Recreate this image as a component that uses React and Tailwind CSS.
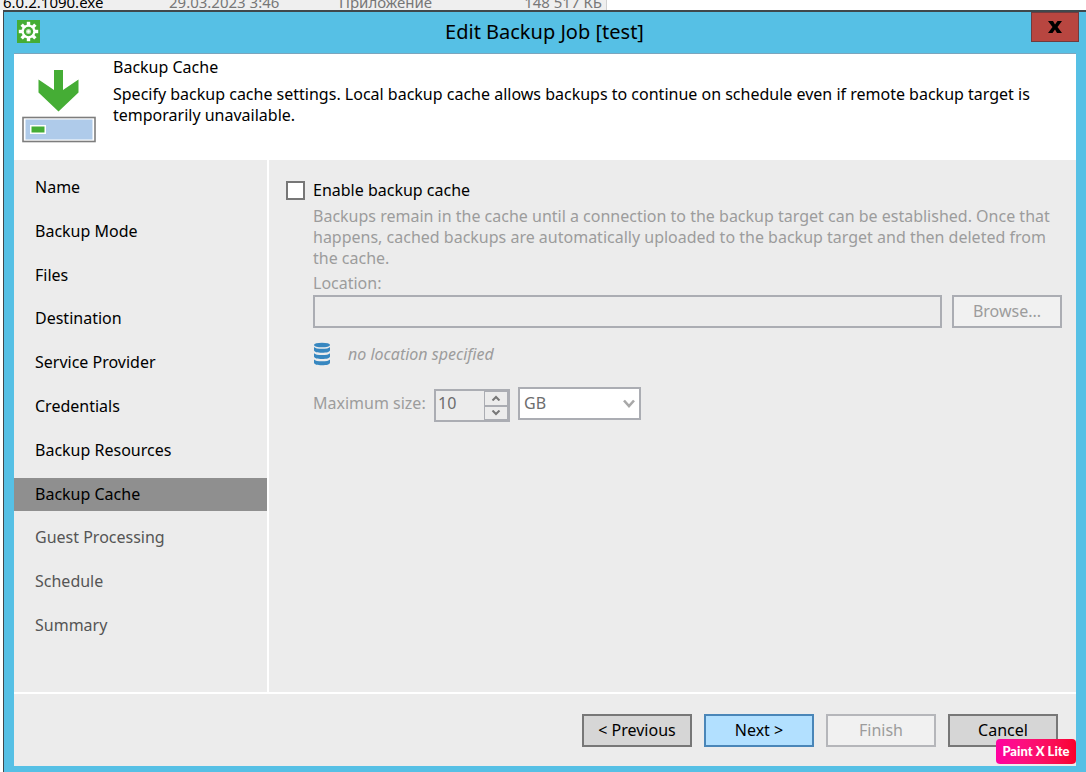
import React, { useState } from 'react';

const steps = [
  { name: 'Name', visited: true },
  { name: 'Backup Mode', visited: true },
  { name: 'Files', visited: true },
  { name: 'Destination', visited: true },
  { name: 'Service Provider', visited: true },
  { name: 'Credentials', visited: true },
  { name: 'Backup Resources', visited: true },
  { name: 'Backup Cache', visited: true },
  { name: 'Guest Processing', visited: false },
  { name: 'Schedule', visited: false },
  { name: 'Summary', visited: false },
];

const GearIcon = () => (
  <svg viewBox="0 0 23 23" className="h-[23px] w-[23px]" aria-hidden="true">
    <rect width="23" height="23" fill="#45ad35" />
    <g fill="#fff">
      <rect x="9.8" y="1.8" width="3.4" height="19.4" />
      <rect x="9.8" y="1.8" width="3.4" height="19.4" transform="rotate(45 11.5 11.5)" />
      <rect x="9.8" y="1.8" width="3.4" height="19.4" transform="rotate(90 11.5 11.5)" />
      <rect x="9.8" y="1.8" width="3.4" height="19.4" transform="rotate(135 11.5 11.5)" />
      <circle cx="11.5" cy="11.5" r="7" />
    </g>
    <circle cx="11.5" cy="11.5" r="4.7" fill="#45ad35" />
    <circle cx="11.5" cy="11.5" r="2.5" fill="#c4e6bd" />
    <circle cx="11.5" cy="11.5" r="1.2" fill="#fff" />
  </svg>
);

const CacheIcon = () => (
  <svg viewBox="0 0 74 74" className="h-[74px] w-[74px] shrink-0" aria-hidden="true">
    <path d="M32 1h9v20l15.500-10.500v13L36.500 42.500 16.500 23.500v-13L32 21z" fill="#45ad35" />
    <rect x="1" y="48.500" width="72" height="24" fill="#fff" stroke="#7d7d7d" strokeWidth="1.600" />
    <rect x="3.500" y="50.500" width="67" height="20" fill="#afcbea" />
    <rect x="8" y="56" width="16" height="9" fill="#fff" />
    <rect x="9.500" y="57.500" width="13" height="6" fill="#45ad35" />
  </svg>
);

const DatabaseIcon = () => (
  <svg viewBox="0 0 18 24" className="h-6 w-[18px]" fill="#3787c0" aria-hidden="true">
    <ellipse cx="9" cy="3" rx="8" ry="2.300" />
    <path d="M1 5c1 1.300 4 1.800 8 1.800s7-.5 8-1.800v3.200c0 1.700-3.500 2.500-8 2.500s-8-.8-8-2.500z" />
    <path d="M1 11.200c1 1.300 4 1.800 8 1.800s7-.5 8-1.800v3.200c0 1.700-3.500 2.500-8 2.500s-8-.8-8-2.500z" />
    <path d="M1 17.500c1 1.300 4 1.800 8 1.800s7-.5 8-1.800v3.200c0 1.700-3.500 2.500-8 2.500s-8-.8-8-2.500z" />
  </svg>
);

const App = () => {
  const [current, setCurrent] = useState('Backup Cache');
  const [enabled, setEnabled] = useState(false);
  const [location, setLocation] = useState('');
  const [size, setSize] = useState(10);
  const [unit, setUnit] = useState('GB');

  const buttonClass = 'h-[33px] w-[110px] border-2';

  return (
    <div className="flex min-h-screen flex-col bg-white font-['Noto_Sans',sans-serif] text-[16px] leading-[21px] text-black">
      {/* file list row behind the dialog */}
      <div className="flex h-[10px] items-end overflow-hidden whitespace-nowrap text-[15px] leading-4">
        <div className="flex w-[607px] shrink-0 border-r border-[#d0d0d0] bg-[#efefef] text-[#777]">
          <span className="w-[169px] pl-[3px] text-black">6.0.2.1090.exe</span>
          <span className="w-[170px]">29.03.2023 3:46</span>
          <span className="flex-1">Приложение</span>
          <span className="pr-1">148 517 КБ</span>
        </div>
      </div>

      <div className="ml-[3px] flex flex-1 flex-col border-t-2 border-l border-[#40484c] bg-[#56c0e5]">
        <header className="flex h-[41px] items-start">
          <div className="flex w-[54px] pt-2 pl-[13px]">
            <GearIcon />
          </div>
          <h1 className="flex-1 pt-1 text-center text-[20px] leading-8">Edit Backup Job [test]</h1>
          <button type="button" aria-label="Close" className="mr-[7px] flex h-[30px] w-12 items-center justify-center border border-[#6f3b3f] bg-[#b84640]">
            <svg viewBox="0 0 14 12" className="h-3 w-[14px]" aria-hidden="true">
              <path d="M0 0h5l2 3.500L9.500 0H14L9.500 6l4.500 6H9L7 8.500 4.500 12H0l4.500-6z" />
            </svg>
          </button>
        </header>

        <div className="relative mr-[10px] mb-[6px] ml-[10px] flex flex-1 flex-col bg-[#ececec]">
          <div className="flex h-[107px] border-t border-[#7ba5bd] bg-white">
            <div className="w-[99px] shrink-0 pt-[15px] pl-2">
              <CacheIcon />
            </div>
            <div className="flex-1 pt-[3px] pr-10">
              <h2>Backup Cache</h2>
              <p className="mt-[6px]">
                Specify backup cache settings. Local backup cache allows backups to continue on schedule even if remote backup target is temporarily unavailable.
              </p>
            </div>
          </div>

          <div className="flex flex-1">
            <nav className="flex w-[255px] shrink-0 flex-col justify-between border-r-2 border-white pt-[11px] pb-[50px]">
              {steps.map((step) => (
                <button
                  key={step.name}
                  type="button"
                  onClick={() => setCurrent(step.name)}
                  className={`h-[33px] pl-[21px] text-left ${step.name === current ? 'bg-[#8f8f8f]' : ''} ${step.visited ? 'text-black' : 'text-[#555]'}`}
                >
                  {step.name}
                </button>
              ))}
            </nav>

            <main className="flex-1 pt-5 pr-[14px] pl-[17px] text-[#9c9c9c]">
              <div className="flex items-center">
                <input
                  id="enable"
                  type="checkbox"
                  checked={enabled}
                  onChange={(e) => setEnabled(e.target.checked)}
                  className="h-[19px] w-[19px] appearance-none border-2 border-[#777] bg-white checked:bg-[#3787c0]"
                />
                <label htmlFor="enable" className="pl-2 text-black">Enable backup cache</label>
              </div>

              <div className="pt-[5px] pl-[27px]">
                <p>
                  Backups remain in the cache until a connection to the backup target can be established. Once that happens, cached backups are automatically uploaded to the backup target and then deleted from the cache.
                </p>
                <label htmlFor="location" className="mt-1 block">Location:</label>
                <div className="mt-px flex gap-[10px]">
                  <input
                    id="location"
                    type="text"
                    value={location}
                    onChange={(e) => setLocation(e.target.value)}
                    disabled={!enabled}
                    className="h-[33px] min-w-0 flex-1 border-2 border-[#abadb3] px-2"
                  />
                  <button type="button" disabled={!enabled} className={`${buttonClass} border-[#abadb3] bg-[#f1f1f1]`}>Browse...</button>
                </div>

                <div className="mt-[14px] flex h-6 items-center">
                  <DatabaseIcon />
                  <span className="pl-[17px] italic">no location specified</span>
                </div>

                <div className="mt-[21px] flex items-start">
                  <label htmlFor="size" className="w-[121px] pt-[6px]">Maximum size:</label>
                  <div className="mt-[2px] flex h-[33px] w-[76px] border-2 border-[#abadb3]">
                    <input
                      id="size"
                      type="number"
                      value={size}
                      onChange={(e) => setSize(Number(e.target.value))}
                      disabled={!enabled}
                      className="min-w-0 flex-1 appearance-none pb-1 pl-[2px] text-[#6d6d6d] [-moz-appearance:textfield] [&::-webkit-inner-spin-button]:appearance-none"
                    />
                    <div className="flex w-6 flex-col">
                      <button type="button" aria-label="Increase" disabled={!enabled} onClick={() => setSize(size + 1)} className="flex flex-1 items-center justify-center border border-[#abadb3]">
                        <svg viewBox="0 0 10 6" className="h-[6px] w-[10px]" aria-hidden="true">
                          <path d="M1.500 5.500L5 2l3.500 3.500" fill="none" stroke="#777" strokeWidth="2" />
                        </svg>
                      </button>
                      <button type="button" aria-label="Decrease" disabled={!enabled} onClick={() => setSize(size - 1)} className="flex flex-1 items-center justify-center border border-[#abadb3]">
                        <svg viewBox="0 0 10 6" className="h-[6px] w-[10px]" aria-hidden="true">
                          <path d="M1.500 .5L5 4 8.500 .5" fill="none" stroke="#777" strokeWidth="2" />
                        </svg>
                      </button>
                    </div>
                  </div>
                  <div className="relative ml-2">
                    <select
                      aria-label="Size unit"
                      value={unit}
                      onChange={(e) => setUnit(e.target.value)}
                      disabled={!enabled}
                      className="block h-[33px] w-[123px] appearance-none border-2 border-[#abadb3] bg-white pl-1 text-[#6d6d6d] opacity-100"
                    >
                      <option>MB</option>
                      <option>GB</option>
                      <option>TB</option>
                    </select>
                    <svg viewBox="0 0 12 9" className="pointer-events-none absolute top-3 right-[6px] h-[9px] w-3" aria-hidden="true">
                      <path d="M1 1.500l5 5.500 5-5.500" fill="none" stroke="#a8a8a8" strokeWidth="2.600" />
                    </svg>
                  </div>
                </div>
              </div>
            </main>
          </div>

          <footer className="flex h-[74px] justify-end gap-3 border-t-2 border-white pt-5 pr-[18px]">
            <button type="button" className={`${buttonClass} border-[#777] bg-[#d6d6d6]`}>&lt; Previous</button>
            <button type="button" className={`${buttonClass} border-[#4a86b8] bg-[#b2e0ff]`}>Next &gt;</button>
            <button type="button" disabled className={`${buttonClass} border-[#b5b6ba] bg-[#f1f1f1] text-[#9c9c9c]`}>Finish</button>
            <button type="button" className={`${buttonClass} border-[#777] bg-[#d6d6d6]`}>Cancel</button>
          </footer>

          <div className="absolute right-0 bottom-[2px] flex h-[25px] w-20 items-center justify-center rounded bg-linear-to-r from-[#ff00a0] to-[#f9002b] font-['Lato',sans-serif] text-[13px] font-black text-white">
            Paint X Lite
          </div>
        </div>
      </div>
    </div>
  );
};

export default App;
